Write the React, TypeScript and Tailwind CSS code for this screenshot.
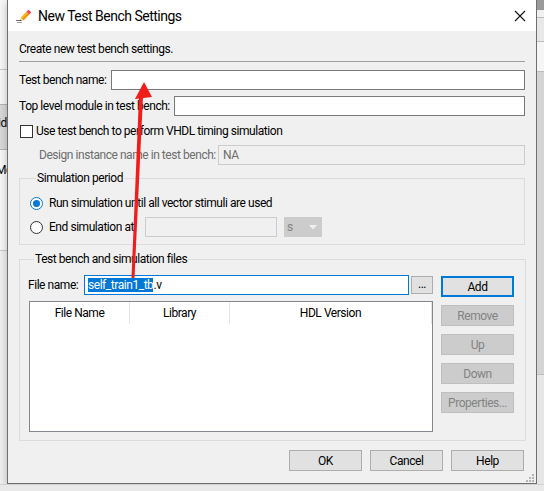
import React from 'react';

const Button: React.FC<{ label: string; disabled?: boolean; primary?: boolean }> = ({ label, disabled, primary }) => {
    let cls = 'border border-[#adadad] bg-[#e1e1e1] text-black';
    if (primary) cls = 'border-2 border-[#0078d7] bg-[#e1e1e1] text-black';
    if (disabled) cls = 'border border-[#bfbfbf] bg-[#cccccc] text-[#838383]';
    return (
        <div className={`w-[73px] h-[21px] flex items-center justify-center text-[12px] leading-none whitespace-nowrap ${cls}`}>
            {label}
        </div>
    );
};

const Radio: React.FC<{ checked?: boolean }> = ({ checked }) => (
    checked ? (
        <div className="w-[13px] h-[13px] rounded-full border border-[#0078d7] bg-white flex items-center justify-center">
            <div className="w-[7px] h-[7px] rounded-full bg-[#0078d7]" />
        </div>
    ) : (
        <div className="w-[13px] h-[13px] rounded-full border border-[#333333] bg-white" />
    )
);

const PencilIcon = () => (
    <svg width="17" height="16" viewBox="0 0 17 16">
        <rect x="0" y="12" width="6" height="1" fill="#6b6b6b" />
        <rect x="1" y="14" width="5" height="1" fill="#9a9a9a" />
        <g transform="rotate(-45 9 8)">
            <polygon points="2,8 5,6 5,10" fill="#f3d9a4" />
            <polygon points="2,8 3.3,7.1 3.3,8.9" fill="#333" />
            <rect x="5" y="6" width="8" height="4" fill="#f6b81c" />
            <rect x="5" y="8" width="8" height="2" fill="#e59a0c" />
            <rect x="13" y="6" width="3" height="4" fill="#e8465a" />
        </g>
    </svg>
);

const App = () => {
    return (
        <div className="w-[544px] h-[491px] overflow-hidden relative bg-[#e4e4e4] flex flex-col font-['Roboto',sans-serif] text-[12px] tracking-[-0.45px] text-black">
            <div className="flex h-[484px]">
                {/* app behind, left side */}
                <div className="w-[7px] flex flex-col bg-[#f7f7f7] overflow-hidden">
                    <div className="h-[70px] border-b border-[#c8c8c8]" />
                    <div className="h-[34px]" />
                    <div className="h-[46px] bg-[#d9d9d9] border-y border-[#b5b5b5] text-[12px] leading-[36px] whitespace-nowrap -ml-[2px]">id</div>
                    <div className="h-[100px] text-[12px] leading-[40px] whitespace-nowrap -ml-[4px]">Mc</div>
                    <div className="flex-1 border-t border-[#c8c8c8] bg-[#efefef]" />
                </div>

                {/* dialog */}
                <div className="w-[530px] flex flex-col border-x border-b border-[#6f6f6f] bg-[#f0f0f0] shadow-[0_2px_8px_rgba(0,0,0,0.25)]">
                    <div className="h-[31px] bg-white flex items-center pl-[8px] pr-[10px]">
                        <PencilIcon />
                        <span className="ml-[5px] text-[14px] tracking-[-0.5px] leading-none text-black whitespace-nowrap">New Test Bench Settings</span>
                        <svg className="ml-auto" width="12" height="12" viewBox="0 0 12 12">
                            <path d="M1 1 L11 11 M11 1 L1 11" stroke="#111" strokeWidth="1.1" />
                        </svg>
                    </div>

                    <div className="flex flex-col px-[11px] whitespace-nowrap">
                        <div className="mt-[10px] h-[16px] leading-[16px]">Create new test bench settings.</div>
                        <div className="mt-[4px] h-px bg-[#a0a0a0]" />

                        <div className="mt-[8px] flex items-center h-[20px]">
                            <div className="w-[92px] leading-none">Test bench name:</div>
                            <div className="flex-1 h-[20px] border border-[#7a7a7a] bg-white" />
                        </div>
                        <div className="mt-[6px] flex items-center h-[20px]">
                            <div className="w-[155px] leading-none">Top level module in test bench:</div>
                            <div className="flex-1 h-[20px] border border-[#7a7a7a] bg-white" />
                        </div>

                        <div className="mt-[7px] flex items-center h-[16px]">
                            <div className="ml-[1px] w-[13px] h-[13px] border border-[#333333] bg-white" />
                            <div className="ml-[3px] leading-none">Use test bench to perform VHDL timing simulation</div>
                        </div>

                        <div className="mt-[6px] flex items-center h-[20px] pl-[20px]">
                            <div className="w-[179px] leading-none text-[#6d6d6d]">Design instance name in test bench:</div>
                            <div className="flex-1 h-[20px] border border-[#cccccc] bg-[#f0f0f0] flex items-center pl-[4px] text-[#6d6d6d]">NA</div>
                        </div>

                        <fieldset className="mt-[5px] border border-[#dcdcdc] pl-[10px] pb-[7px]">
                            <legend className="ml-[6px] px-[1px] h-[16px] leading-[16px]">Simulation period</legend>
                            <div className="mt-[7px] flex items-center h-[20px]">
                                <Radio checked />
                                <div className="ml-[6px] leading-none">Run simulation until all vector stimuli are used</div>
                            </div>
                            <div className="mt-[4px] flex items-center h-[20px]">
                                <Radio />
                                <div className="ml-[6px] w-[96px] leading-none">End simulation at:</div>
                                <div className="w-[132px] h-[20px] border border-[#cccccc] bg-[#f0f0f0]" />
                                <div className="ml-[7px] w-[38px] h-[20px] bg-[#cccccc] flex items-center pl-[3px] text-[#838383]">
                                    <span className="leading-none">s</span>
                                    <svg className="ml-auto mr-[5px]" width="8" height="5" viewBox="0 0 8 5">
                                        <path d="M0 0 L8 0 L4 4.5 Z" fill="#f0f0f0" />
                                    </svg>
                                </div>
                            </div>
                        </fieldset>

                        <fieldset className="mt-[6px] border border-[#dcdcdc] pl-[8px] pr-[11px] pb-[8px]">
                            <legend className="ml-[6px] px-[1px] h-[16px] leading-[16px]">Test bench and simulation files</legend>
                            <div className="flex mt-[8px]">
                                <div className="w-[405px] flex flex-col">
                                    <div className="flex items-center h-[20px]">
                                        <div className="w-[56px] leading-none">File name:</div>
                                        <div className="w-[325px] h-[20px] border border-[#0078d7] bg-white flex items-center pl-[3px]">
                                            <span className="bg-[#0078d7] text-white leading-[14px]">self_train1_tb</span>
                                            <span className="leading-[14px]">.v</span>
                                        </div>
                                        <div className="ml-[2px] w-[22px] h-[18px] border border-[#adadad] bg-[#e1e1e1] flex items-center justify-center leading-none pb-[3px]">...</div>
                                    </div>
                                    <div className="mt-[6px] ml-[1px] h-[131px] border border-[#828790] bg-white flex flex-col">
                                        <div className="flex h-[22px]">
                                            <div className="w-[100px] flex items-center justify-center border-r border-[#e5e5e5] leading-none">File Name</div>
                                            <div className="w-[100px] flex items-center justify-center border-r border-[#e5e5e5] leading-none">Library</div>
                                            <div className="flex-1 flex items-center justify-center border-r border-[#e5e5e5] leading-none">HDL Version</div>
                                        </div>
                                    </div>
                                </div>
                                <div className="ml-[8px] mt-[1px] flex flex-col gap-[8px]">
                                    <Button label="Add" primary />
                                    <Button label="Remove" disabled />
                                    <Button label="Up" disabled />
                                    <Button label="Down" disabled />
                                    <Button label="Properties..." disabled />
                                </div>
                            </div>
                        </fieldset>

                        <div className="mt-[9px] flex justify-end gap-[8px] pr-[1px]">
                            <Button label="OK" />
                            <Button label="Cancel" />
                            <Button label="Help" />
                        </div>
                    </div>

                    <div className="mt-auto flex justify-end pr-[2px] pb-[1px]">
                        <svg width="9" height="9" viewBox="0 0 9 9">
                            <rect x="7" y="1" width="2" height="2" fill="#b5b5b5" />
                            <rect x="4" y="4" width="2" height="2" fill="#b5b5b5" />
                            <rect x="7" y="4" width="2" height="2" fill="#b5b5b5" />
                            <rect x="1" y="7" width="2" height="2" fill="#b5b5b5" />
                            <rect x="4" y="7" width="2" height="2" fill="#b5b5b5" />
                            <rect x="7" y="7" width="2" height="2" fill="#b5b5b5" />
                        </svg>
                    </div>
                </div>

                {/* app behind, right side */}
                <div className="flex-1 flex flex-col bg-[#d8d8d8]">
                    <div className="h-[10px] bg-[#9a9a9a]" />
                    <div className="h-[8px] border-b border-[#bdbdbd] bg-[#f0f0f0]" />
                    <div className="h-[24px] border-b border-[#bdbdbd] bg-[#e8e8e8]" />
                    <div className="h-[30px] bg-[#f5f5f5] border-b border-[#bdbdbd]" />
                    <div className="flex-1 bg-[#d4d4d4]" />
                    <div className="h-[110px] bg-[#e6e6e6] border-t border-[#bdbdbd]" />
                </div>
            </div>
            <div className="flex-1 bg-[#e9e9e9] border-t border-[#d0d0d0]" />

            {/* red annotation arrow */}
            <svg className="absolute left-0 top-0 pointer-events-none" width="544" height="491" viewBox="0 0 544 491">
                <polygon points="131.5,278 134.5,278 143,96 139,96" fill="#f01d1d" />
                <polygon points="144,82 135,99 152,97" fill="#f01d1d" />
            </svg>
        </div>
    );
};

export default App;
